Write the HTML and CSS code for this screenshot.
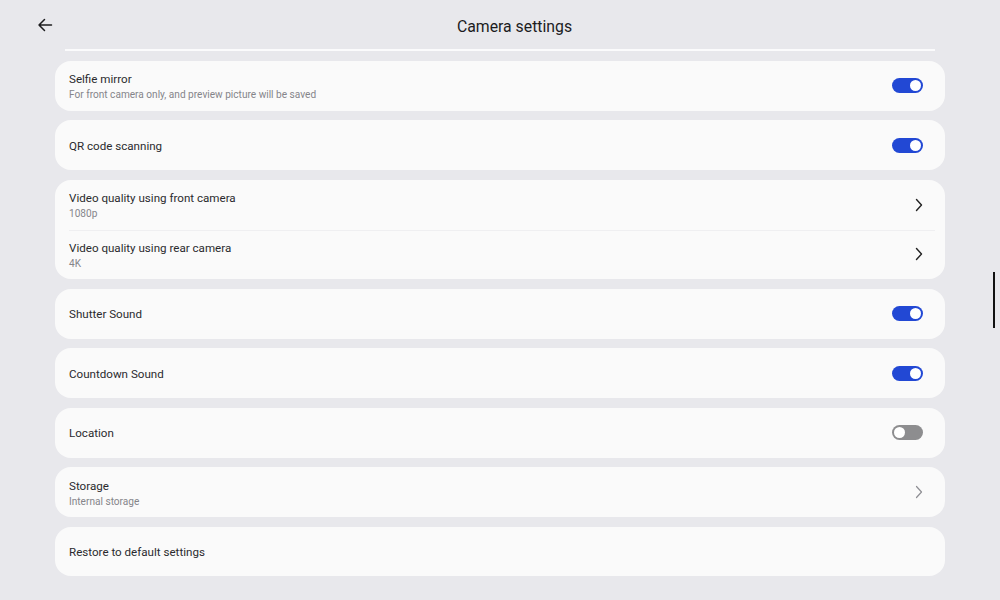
FILE: index.html
```html
<!DOCTYPE html>
<html lang="en">
<head>
<meta charset="utf-8">
<title>Camera settings</title>
<link rel="stylesheet" href="styles.css">
</head>
<body>
<div class="page">
  <header class="topbar">
    <button class="back" aria-label="Back">
      <svg width="16" height="16" viewBox="0 0 16 16"><path d="M14.5 8H2M7.5 2.5L2 8l5.5 5.5" fill="none" stroke="#1c1c1e" stroke-width="1.5" stroke-linecap="round" stroke-linejoin="round"/></svg>
    </button>
    <h1 class="title">Camera settings</h1>
  </header>
  <div class="rule"></div>

  <main class="list">
    <section class="card">
      <div class="row">
        <div class="text"><div class="label">Selfie mirror</div><div class="sub">For front camera only, and preview picture will be saved</div></div>
        <span class="switch on"></span>
      </div>
    </section>
    <section class="card">
      <div class="row">
        <div class="text"><div class="label">QR code scanning</div></div>
        <span class="switch on"></span>
      </div>
    </section>
    <section class="card">
      <div class="row">
        <div class="text"><div class="label">Video quality using front camera</div><div class="sub">1080p</div></div>
        <svg class="chev" width="8" height="14" viewBox="0 0 8 14"><path d="M1.5 1.5L6.5 7l-5 5.5" fill="none" stroke="#222" stroke-width="1.4" stroke-linecap="round" stroke-linejoin="round"/></svg>
      </div>
      <div class="row sep">
        <div class="text"><div class="label">Video quality using rear camera</div><div class="sub">4K</div></div>
        <svg class="chev" width="8" height="14" viewBox="0 0 8 14"><path d="M1.5 1.5L6.5 7l-5 5.5" fill="none" stroke="#222" stroke-width="1.4" stroke-linecap="round" stroke-linejoin="round"/></svg>
      </div>
    </section>
    <section class="card">
      <div class="row">
        <div class="text"><div class="label">Shutter Sound</div></div>
        <span class="switch on"></span>
      </div>
    </section>
    <section class="card">
      <div class="row">
        <div class="text"><div class="label">Countdown Sound</div></div>
        <span class="switch on"></span>
      </div>
    </section>
    <section class="card">
      <div class="row">
        <div class="text"><div class="label">Location</div></div>
        <span class="switch"></span>
      </div>
    </section>
    <section class="card">
      <div class="row">
        <div class="text"><div class="label">Storage</div><div class="sub">Internal storage</div></div>
        <svg class="chev" width="8" height="14" viewBox="0 0 8 14"><path d="M1.5 1.5L6.5 7l-5 5.5" fill="none" stroke="#8e8e93" stroke-width="1.2" stroke-linecap="round" stroke-linejoin="round"/></svg>
      </div>
    </section>
    <section class="card">
      <div class="row">
        <div class="text"><div class="label">Restore to default settings</div></div>
      </div>
    </section>
  </main>

  <div class="scrollbar"></div>
</div>
</body>
</html>
```

FILE: styles.css
```css
* { box-sizing: border-box; }

html, body {
  margin: 0;
  height: 100%;
}

body {
  background: #e8e8ec;
  font-family: Roboto, "Noto Sans", "Liberation Sans", sans-serif;
  color: #222;
  overflow: hidden;
}

.page {
  position: relative;
  width: 1000px;
  height: 600px;
}

.topbar {
  display: flex;
  align-items: center;
  justify-content: center;
  height: 49px;
  position: relative;
}

.back {
  position: absolute;
  left: 37px;
  top: 17px;
  padding: 0;
  border: 0;
  background: none;
  width: 16px;
  height: 16px;
  display: flex;
}

.title {
  margin: 0 0 0 29px;
  font-size: 15.8px;
  font-weight: 400;
  color: #1c1c1e;
  padding-top: 3px;
}

.rule {
  height: 2px;
  margin: 0 65px;
  background: #fbfbfc;
}

.list {
  display: flex;
  flex-direction: column;
  gap: 9.6px;
  padding: 10px 55px 0;
}

.card {
  background: #fafafa;
  border-radius: 16px;
}

.row {
  display: flex;
  align-items: center;
  justify-content: space-between;
  height: 49.8px;
  padding: 0 22px 0 14px;
}

.row.sep {
  position: relative;
}

.row.sep::before {
  content: "";
  position: absolute;
  top: 0;
  left: 14px;
  right: 10px;
  height: 1px;
  background: #efeff1;
}

.text {
  display: flex;
  flex-direction: column;
  gap: 1px;
  padding-top: 2px;
}

.label {
  font-size: 11.6px;
  line-height: 15px;
  color: #2a2a2e;
}

.sub {
  font-size: 10.1px;
  line-height: 13px;
  color: #85858a;
}

.chev {
  margin-right: 0;
}

.switch {
  position: relative;
  width: 31px;
  height: 15px;
  border-radius: 8px;
  background: #8d8d8f;
}

.switch::after {
  content: "";
  position: absolute;
  top: 2px;
  left: 2px;
  width: 11px;
  height: 11px;
  border-radius: 50%;
  background: #fff;
}

.switch.on {
  background: #2248d4;
}

.switch.on::after {
  left: auto;
  right: 2px;
}

.scrollbar {
  position: absolute;
  left: 993px;
  top: 272px;
  width: 2px;
  height: 56px;
  background: #111;
}
```
